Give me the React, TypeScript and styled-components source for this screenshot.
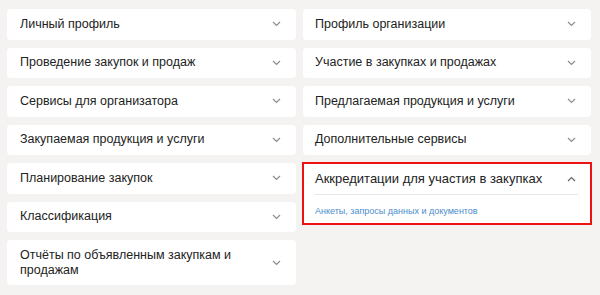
import React from 'react';
import styled, { createGlobalStyle } from 'styled-components';

const GlobalStyle = createGlobalStyle`
  * {
    box-sizing: border-box;
  }
  html, body {
    margin: 0;
    padding: 0;
    background: #f4f3f1;
    font-family: "Liberation Sans", Arial, sans-serif;
  }
`;

const Page = styled.div`
  display: grid;
  grid-template-columns: 289px 288px;
  column-gap: 7px;
  padding: 9px 9px 9px 7px;
  align-items: start;
`;

const Column = styled.div`
  display: flex;
  flex-direction: column;
  gap: 8px;
`;

const Card = styled.div<{ $active?: boolean }>`
  background: #fff;
  border-radius: ${p => (p.$active ? '0' : '4px')};
  outline: ${p => (p.$active ? '2px solid #ee1111' : 'none')};
  outline-offset: -1px;
`;

const Header = styled.div<{ $pad: number; $open?: boolean }>`
  display: flex;
  align-items: center;
  justify-content: space-between;
  min-height: ${p => (p.$open ? '31px' : '30.5px')};
  padding: ${p => (p.$open ? '8px' : '7.5px')} 15px ${p => (p.$open ? '8px' : '7.5px')} ${p => p.$pad}px;
  color: #222;
  line-height: 15px;
`;

const Title = styled.span<{ $big?: boolean }>`
  font-size: ${p => (p.$big ? '13px' : '12.5px')};
  max-width: ${p => (p.$big ? 'none' : '230px')};
`;

const Body = styled.div`
  margin: 0 13px 0 12px;
  border-top: 1px solid #e6e6e6;
  padding: 8px 0 7px;
  line-height: 12px;
`;

const Link = styled.a`
  color: #4a8dcc;
  font-size: 9px;
  text-decoration: none;
`;

const Chevron: React.FC<{ up?: boolean }> = ({ up }) => (
  <svg width="9" height="6" viewBox="0 0 9 6" fill="none">
    <path
      d={up ? 'M1 5L4.5 1.5L8 5' : 'M1 1L4.5 4.5L8 1'}
      stroke={up ? '#666' : '#8c8c8c'}
      strokeWidth="1.2"
    />
  </svg>
);

const left = [
  'Личный профиль',
  'Проведение закупок и продаж',
  'Сервисы для организатора',
  'Закупаемая продукция и услуги',
  'Планирование закупок',
  'Классификация',
  'Отчёты по объявленным закупкам и продажам',
];

const right = [
  'Профиль организации',
  'Участие в закупках и продажах',
  'Предлагаемая продукция и услуги',
  'Дополнительные сервисы',
];

const App: React.FC = () => (
  <>
    <GlobalStyle />
    <Page>
      <Column>
        {left.map(t => (
          <Card key={t}>
            <Header $pad={13}>
              <Title>{t}</Title>
              <Chevron />
            </Header>
          </Card>
        ))}
      </Column>
      <Column>
        {right.map(t => (
          <Card key={t}>
            <Header $pad={12}>
              <Title>{t}</Title>
              <Chevron />
            </Header>
          </Card>
        ))}
        <Card $active>
          <Header $pad={12} $open>
            <Title $big>Аккредитации для участия в закупках</Title>
            <Chevron up />
          </Header>
          <Body>
            <Link href="#">Анкеты, запросы данных и документов</Link>
          </Body>
        </Card>
      </Column>
    </Page>
  </>
);

export default App;
